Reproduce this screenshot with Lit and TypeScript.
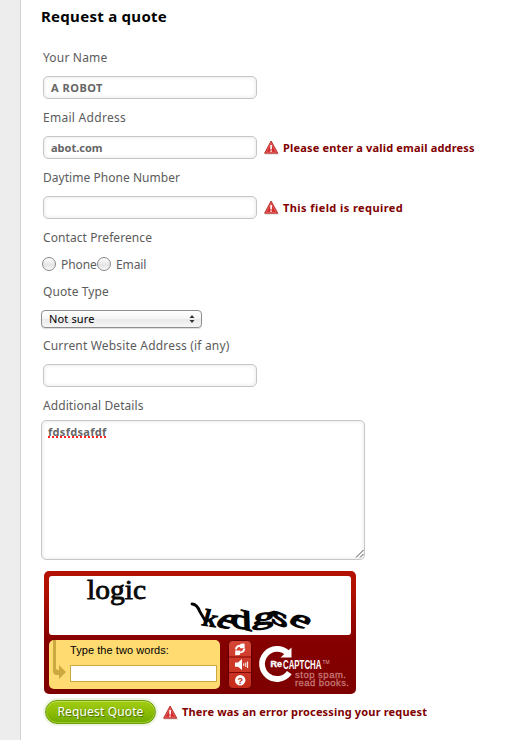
import { LitElement, html, css, svg } from "lit";
import { customElement, property } from "lit/decorators.js";

@customElement("error-note")
class ErrorNote extends LitElement {
  @property() text = "";
  static styles = css`
    :host { display: flex; align-items: center; height: 23px; gap: 4px; }
    svg { display: block; flex: none; }
    span { font: bold 11px/16px "Noto Sans", sans-serif; color: #800000; white-space: nowrap; letter-spacing: var(--track, 0.17px); }
  `;
  render() {
    return html`<svg width="15" height="15" viewBox="0 0 15 15">
        <path d="M1 14.2H15" stroke="#ddd" stroke-width="1"/>
        <path d="M7.1 1 13.8 13.2H.6Z" fill="#d62e2e" stroke="#b93a36" stroke-width="1" stroke-linejoin="round"/>
        <path d="M7.1 3 12.2 12.3H2.2Z" fill="none" stroke="#e87874" stroke-width=".6"/>
        <path d="M7.1 5v4.4M7.1 10.4v1.4" stroke="#fff" stroke-width="1.6"/>
      </svg><span>${this.text}</span>`;
  }
}

@customElement("text-field")
class TextField extends LitElement {
  @property() label = "";
  @property() value = "";
  @property() error = "";
  static styles = css`
    :host { display: block; height: 60px; }
    .label { font: 12px/20px "Noto Sans", sans-serif; color: #5c5c5c; height: 20px; padding-top: 1px; margin-bottom: 8px; letter-spacing: var(--label-track, 0.18px); white-space: nowrap; }
    .row { display: flex; gap: 7px; }
    .box { box-sizing: border-box; width: 214px; height: 23px; border: 1px solid #c6c6c6; border-radius: 5px; padding: 0 7px;
      font: bold 11px/22px "Noto Sans", sans-serif; letter-spacing: var(--value-track, 0); color: #666; box-shadow: inset 0 0 4px #e4e4e4; background: #fff; }
  `;
  render() {
    return html`<div class="label">${this.label}</div>
      <div class="row"><div class="box">${this.value}</div>
      ${this.error ? html`<error-note .text=${this.error}></error-note>` : ""}</div>`;
  }
}

@customElement("captcha-box")
class CaptchaBox extends LitElement {
  static styles = css`
    :host { box-sizing: border-box; display: block; width: 312px; height: 123px; padding: 5px; border-radius: 5px;
      background: linear-gradient(#b41200, #b01000 22px, #850000 72px, #7d0000); }
    svg { display: block; overflow: visible; }
    .words { background: #fff; border-radius: 3px; height: 59px; margin-bottom: 5px; }
    .bottom { display: flex; }
    .answer { position: relative; box-sizing: border-box; width: 172px; height: 49px; border-radius: 5px; background: #ffdb72; padding: 3px 0 0 21px; }
    .arrow { position: absolute; left: 4px; top: 0; }
    .prompt { font: 11px/15px "Liberation Sans", sans-serif; color: #000; margin-bottom: 7px; white-space: nowrap; letter-spacing: .06px; }
    .input { box-sizing: border-box; width: 147px; height: 17px; border: 1px solid #cca940; background: #fff; }
    .tools { margin-left: 8px; width: 24px; }
    .help { font: bold 9px "Liberation Sans", sans-serif; fill: #c42a18; }
    .logo { margin-left: 5px; }
    .re { font: bold 8.5px "Liberation Sans", sans-serif; fill: #fff; stroke: #fff; stroke-width: .4; }
    .cap { font: bold 13px "Liberation Sans", sans-serif; fill: #fff; }
    .tm { font: 5.5px "Liberation Sans", sans-serif; fill: #daa; }
    .tag { font: 9.5px "Liberation Sans", sans-serif; fill: #c47777; stroke: #c47777; stroke-width: .3; }
    .w1 { font: 27px "Liberation Serif", serif; fill: #080808; stroke: #080808; stroke-width: .8; }
    .w2 { font: 25px "Liberation Serif", serif; fill: #050505; stroke: #050505; stroke-width: 1.3; }
  `;
  render() {
    // glyph, x, y, rotation, horizontal skew, x scale, y scale
    const letters: [string, number, number, number, number, number, number][] = [
      ["k", 152, 49, 8, -8, 1.15, 0.95], ["e", 165, 49, 16, -25, 1.45, 1.2], ["d", 182, 50, 14, 16, 1.7, 1.05],
      ["g", 203, 49, -4, -18, 1.7, 0.95], ["s", 222, 46, 22, 18, 1.8, 1], ["e", 238, 47, 20, -20, 1.7, 1.05],
    ];
    return html`
      <div class="words"><svg width="302" height="59" viewBox="0 0 302 59">
        <text class="w1" x="38" y="23.3" textLength="59" lengthAdjust="spacingAndGlyphs">logic</text>
        <path d="M143 28q5 0 8 8l6 10" fill="none" stroke="#050505" stroke-width="2.8" stroke-linecap="round"/>
        ${letters.map(([c, x, y, r, k, sx, sy]) => svg`<text class="w2" transform="translate(${x} ${y}) rotate(${r}) skewX(${k}) scale(${sx} ${sy})">${c}</text>`)}
      </svg></div>
      <div class="bottom">
        <div class="answer">
          <svg class="arrow" width="14" height="40" viewBox="0 0 14 40"><path d="M0 0H3V28Q3 30 5 30H6V25L13 32 6 39V35H4Q0 35 0 31Z" fill="#cca940"/></svg>
          <div class="prompt">Type the two words:</div><div class="input"></div>
        </div>
        <svg class="tools" width="24" height="49" viewBox="0 0 24 49">
          <defs><linearGradient id="b" x2="0" y2="1"><stop stop-color="#d64737"/><stop offset="1" stop-color="#c42a18"/></linearGradient></defs>
          <rect x=".5" y=".5" width="23" height="48" rx="4" fill="url(#b)" stroke="#650000"/>
          <path d="M1 17H23M1 32.5H23" stroke="#820500"/>
          <path d="M8 9.5Q8.2 5.5 13 5.8M16.3 8.5Q16 12.5 11 12.5" fill="none" stroke="#fff" stroke-width="2"/>
          <path d="M12.5 3.8 16.6 3.4V8.3H11.8ZM7.2 10.5H12.3L11.8 15 7.2 15.2Z" fill="#fff"/>
          <path d="M7 22.5h3L14 19V30L10 26.8H7Z" fill="#fff"/>
          <path d="M15.8 23.3v2.6M17.8 22.5v4.5M19.6 21.5v6.5" stroke="#fff" stroke-width="1"/>
          <circle cx="12.2" cy="40.3" r="5.2" fill="#fff"/>
          <text class="help" x="12.2" y="43.5" text-anchor="middle">?</text>
        </svg>
        <svg class="logo" width="94" height="49" viewBox="0 0 94 49">
          <path d="M30.5 13.2A15 15 0 1 0 32.3 32.6" fill="none" stroke="#fff" stroke-width="5.8"/>
          <path d="M34.5 7.5V17.5H23.5Z" fill="#fff"/>
          <text class="re" x="13.5" y="26.8" textLength="11.5" lengthAdjust="spacingAndGlyphs">Re</text>
          <text class="cap" x="26" y="28.7" textLength="38.5" lengthAdjust="spacingAndGlyphs">CAPTCHA</text>
          <text class="tm" x="65.5" y="23.5" textLength="7" lengthAdjust="spacingAndGlyphs">TM</text>
          <text class="tag" x="38" y="38" textLength="51">stop spam.</text>
          <text class="tag" x="38" y="46" textLength="54">read books.</text>
        </svg>
      </div>`;
  }
}

@customElement("app-root")
class AppRoot extends LitElement {
  static styles = css`
    :host { display: flex; height: 740px; background: #fff; overflow: hidden; font-family: "Noto Sans", sans-serif; }
    .side { box-sizing: border-box; width: 21px; background: #ededed; border-right: 1px solid #d2d2d2; flex: none; }
    main { padding-left: 22px; width: 482px; }
    h1 { margin: 6px 0 21px -2px; height: 20px; font: bold 15px/20px "Noto Sans", sans-serif; letter-spacing: .28px; color: #000; white-space: nowrap; }
    .label { box-sizing: border-box; padding-top: 1px; font-size: 12px; line-height: 20px; height: 20px; color: #5c5c5c; letter-spacing: 0.08px; }
    .name { --value-track: 0.5px; }
    .email { --label-track: 0.28px; }
    .phone { --label-track: 0.04px; --track: 0.42px; }
    .radios { display: flex; align-items: center; height: 20px; margin: 7px 0 7px -1px; font-size: 12px; line-height: 20px; color: #5c5c5c; }
    .radio { box-sizing: border-box; flex: none; width: 14px; height: 14px; border: 1px solid #878787; border-radius: 50%; background: linear-gradient(#fff, #e4e4e4 60%, #fafafa); }
    .opt { margin-left: 5px; padding-top: 1px; width: 36px; white-space: nowrap; letter-spacing: -.1px; }
    .select { box-sizing: border-box; display: flex; align-items: center; justify-content: space-between; width: 161px; height: 18px; margin: 9px 0 7px -2px; padding: 0 6px 0 7px;
      border: 1px solid #8e8e8e; border-radius: 4px; background: linear-gradient(#fff, #f4f4f4 50%, #e9e9e9 50%, #f6f6f6); box-shadow: 0 1px 1px #ddd; font-size: 11px; line-height: 16px; color: #000; letter-spacing: .15px; }
    .area { position: relative; box-sizing: border-box; width: 324px; height: 140px; margin: 5px 0 11px -2px; border: 1px solid #c6c6c6; border-radius: 5px; padding: 3px 6px; box-shadow: inset 0 0 4px #e4e4e4;
      font-size: 11px; font-weight: bold; line-height: 16px; color: #666; letter-spacing: .3px; }
    .typo { text-decoration: underline dotted #f22 2px; text-underline-offset: 0; text-decoration-skip-ink: none; }
    .grip { position: absolute; right: 0; bottom: 1px; }
    captcha-box { margin-left: 1px; }
    .submit { display: flex; align-items: center; gap: 7px; margin: 6px 0 0 2px; --track: 0.16px; }
    .button { box-sizing: border-box; width: 111px; height: 24px; border: 1px solid #6f9d10; border-radius: 12px; background: linear-gradient(#a2cc14, #8dbd05 50%, #6eaa02);
      box-shadow: 0 0 0 2px #eef4e4, inset 0 1px 0 #bfe14b, inset 0 0 0 1px #9cca20; color: #fff; font-size: 12px; line-height: 22px; text-align: center; text-shadow: 1px 1px 1px #456b05; letter-spacing: .15px; white-space: nowrap; }
  `;
  render() {
    return html`<div class="side"></div><main>
      <h1>Request a quote</h1>
      <text-field class="name" label="Your Name" value="A ROBOT"></text-field>
      <text-field class="email" label="Email Address" value="abot.com" error="Please enter a valid email address"></text-field>
      <text-field class="phone" label="Daytime Phone Number" error="This field is required"></text-field>
      <div class="label">Contact Preference</div>
      <div class="radios"><div class="radio"></div><span class="opt">Phone</span><div class="radio"></div><span class="opt">Email</span></div>
      <div class="label">Quote Type</div>
      <div class="select"><span>Not sure</span><svg width="6" height="8" viewBox="0 0 6 8"><path d="M3 0 5.5 3H.5ZM3 8 .5 5H5.5Z" fill="#333"/></svg></div>
      <text-field label="Current Website Address (if any)"></text-field>
      <div class="label">Additional Details</div>
      <div class="area"><span class="typo">fdsfdsafdf</span>
        <svg class="grip" width="9" height="9" viewBox="0 0 9 9"><path d="M1 8.5 8.5 1M5 8.5 8.5 5" stroke="#555" fill="none"/></svg></div>
      <captcha-box></captcha-box>
      <div class="submit"><div class="button">Request Quote</div><error-note text="There was an error processing your request"></error-note></div>
    </main>`;
  }
}
